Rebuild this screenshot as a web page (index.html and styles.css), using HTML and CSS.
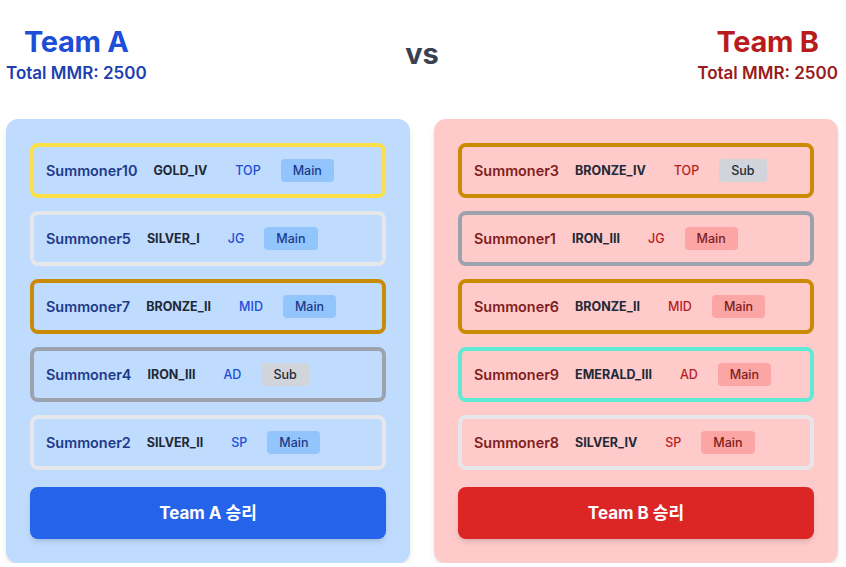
FILE: index.html
```html
<!DOCTYPE html>
<html lang="ko">
<head>
<meta charset="utf-8">
<title>Team Match</title>
<link rel="stylesheet" href="styles.css">
</head>
<body>
<div class="page">
  <header class="header">
    <div class="team-head team-head-a">
      <h1 class="team-title">Team A</h1>
      <p class="team-mmr">Total MMR: 2500</p>
    </div>
    <div class="vs">vs</div>
    <div class="team-head team-head-b">
      <h1 class="team-title">Team B</h1>
      <p class="team-mmr">Total MMR: 2500</p>
    </div>
  </header>

  <main class="panels">
    <section class="panel panel-a">
      <ul class="rows">
        <li class="row tier-gold"><span class="name">Summoner10</span><span class="tier">GOLD_IV</span><span class="pos">TOP</span><span class="badge badge-main">Main</span></li>
        <li class="row tier-silver"><span class="name">Summoner5</span><span class="tier">SILVER_I</span><span class="pos">JG</span><span class="badge badge-main">Main</span></li>
        <li class="row tier-bronze"><span class="name">Summoner7</span><span class="tier">BRONZE_II</span><span class="pos">MID</span><span class="badge badge-main">Main</span></li>
        <li class="row tier-iron"><span class="name">Summoner4</span><span class="tier">IRON_III</span><span class="pos">AD</span><span class="badge badge-sub">Sub</span></li>
        <li class="row tier-silver"><span class="name">Summoner2</span><span class="tier">SILVER_II</span><span class="pos">SP</span><span class="badge badge-main">Main</span></li>
      </ul>
      <button class="win-btn">Team A 승리</button>
    </section>

    <section class="panel panel-b">
      <ul class="rows">
        <li class="row tier-bronze"><span class="name">Summoner3</span><span class="tier">BRONZE_IV</span><span class="pos">TOP</span><span class="badge badge-sub">Sub</span></li>
        <li class="row tier-iron"><span class="name">Summoner1</span><span class="tier">IRON_III</span><span class="pos">JG</span><span class="badge badge-main">Main</span></li>
        <li class="row tier-bronze"><span class="name">Summoner6</span><span class="tier">BRONZE_II</span><span class="pos">MID</span><span class="badge badge-main">Main</span></li>
        <li class="row tier-emerald"><span class="name">Summoner9</span><span class="tier">EMERALD_III</span><span class="pos">AD</span><span class="badge badge-main">Main</span></li>
        <li class="row tier-silver"><span class="name">Summoner8</span><span class="tier">SILVER_IV</span><span class="pos">SP</span><span class="badge badge-main">Main</span></li>
      </ul>
      <button class="win-btn">Team B 승리</button>
    </section>
  </main>
</div>
</body>
</html>
```

FILE: styles.css
```css
* { box-sizing: border-box; }

html, body {
  margin: 0;
  padding: 0;
  background: #ffffff;
}

body {
  font-family: Inter, "Noto Sans", "Noto Sans CJK KR", sans-serif;
  color: #111827;
}

.page {
  padding: 24px 8px 0 6px;
}

.header {
  display: flex;
  align-items: flex-start;
  justify-content: space-between;
  height: 71px;
  margin-bottom: 24px;
}

.team-head {
  text-align: center;
  margin-top: 1px;
}

.team-title {
  margin: 0;
  font-size: 29px;
  line-height: 34px;
  font-weight: 700;
  letter-spacing: -0.3px;
}

.team-mmr {
  margin: 0;
  font-size: 17px;
  line-height: 28px;
  font-weight: 600;
}

.team-head-a .team-title { color: #1d4ed8; }
.team-head-a .team-mmr { color: #1e40af; }
.team-head-b .team-title { color: #b91c1c; }
.team-head-b .team-mmr { color: #991b1b; }

.vs {
  font-size: 29px;
  line-height: 36px;
  font-weight: 700;
  color: #374151;
  margin-top: 12px;
}

.panels {
  display: grid;
  grid-template-columns: 1fr 1fr;
  gap: 24px;
}

.panel {
  border-radius: 12px;
  padding: 24px;
  box-shadow: 0 4px 6px -1px rgba(0,0,0,0.1), 0 2px 4px -2px rgba(0,0,0,0.1);
}

.panel-a { background: #bfdbfe; }
.panel-b { background: #fecaca; }

.rows {
  list-style: none;
  margin: 0 0 17px;
  padding: 0;
  display: flex;
  flex-direction: column;
  gap: 13px;
}

.row {
  display: flex;
  align-items: center;
  height: 55px;
  padding: 0 12px;
  border: 4px solid #e5e7eb;
  border-radius: 8px;
}

.tier-gold { border-color: #fde047; }
.tier-silver { border-color: #e5e7eb; }
.tier-bronze { border-color: #ca8a04; }
.tier-iron { border-color: #9ca3af; }
.tier-emerald { border-color: #5eead4; }

.name {
  font-size: 14.4px;
  font-weight: 600;
  margin-right: 16px;
}

.tier {
  font-size: 12.5px;
  font-weight: 700;
  color: #1f2937;
  margin-right: 28px;
}

.pos {
  font-size: 12.5px;
  font-weight: 500;
  margin-right: 20px;
}

.badge {
  font-size: 12.5px;
  font-weight: 500;
  line-height: 15px;
  padding: 4px 12px;
  border-radius: 4px;
}

.panel-a .name { color: #1e3a8a; }
.panel-a .pos { color: #1d4ed8; }
.panel-a .badge-main { background: #93c5fd; color: #1e3a8a; }

.panel-b .name { color: #7f1d1d; }
.panel-b .pos { color: #b91c1c; }
.panel-b .badge-main { background: #fca5a5; color: #7f1d1d; }

.badge-sub { background: #d1d5db; color: #1f2937; }

.win-btn {
  display: block;
  width: 100%;
  height: 52px;
  padding: 0 0 1px;
  border: 0;
  border-radius: 8px;
  font-family: Inter, "Noto Sans CJK KR", sans-serif;
  font-size: 17px;
  line-height: 24px;
  font-weight: 700;
  color: #ffffff;
  box-shadow: 0 4px 6px -1px rgba(0,0,0,0.1), 0 2px 4px -2px rgba(0,0,0,0.1);
  cursor: pointer;
}

.panel-a .win-btn { background: #2563eb; }
.panel-b .win-btn { background: #dc2626; }
```
